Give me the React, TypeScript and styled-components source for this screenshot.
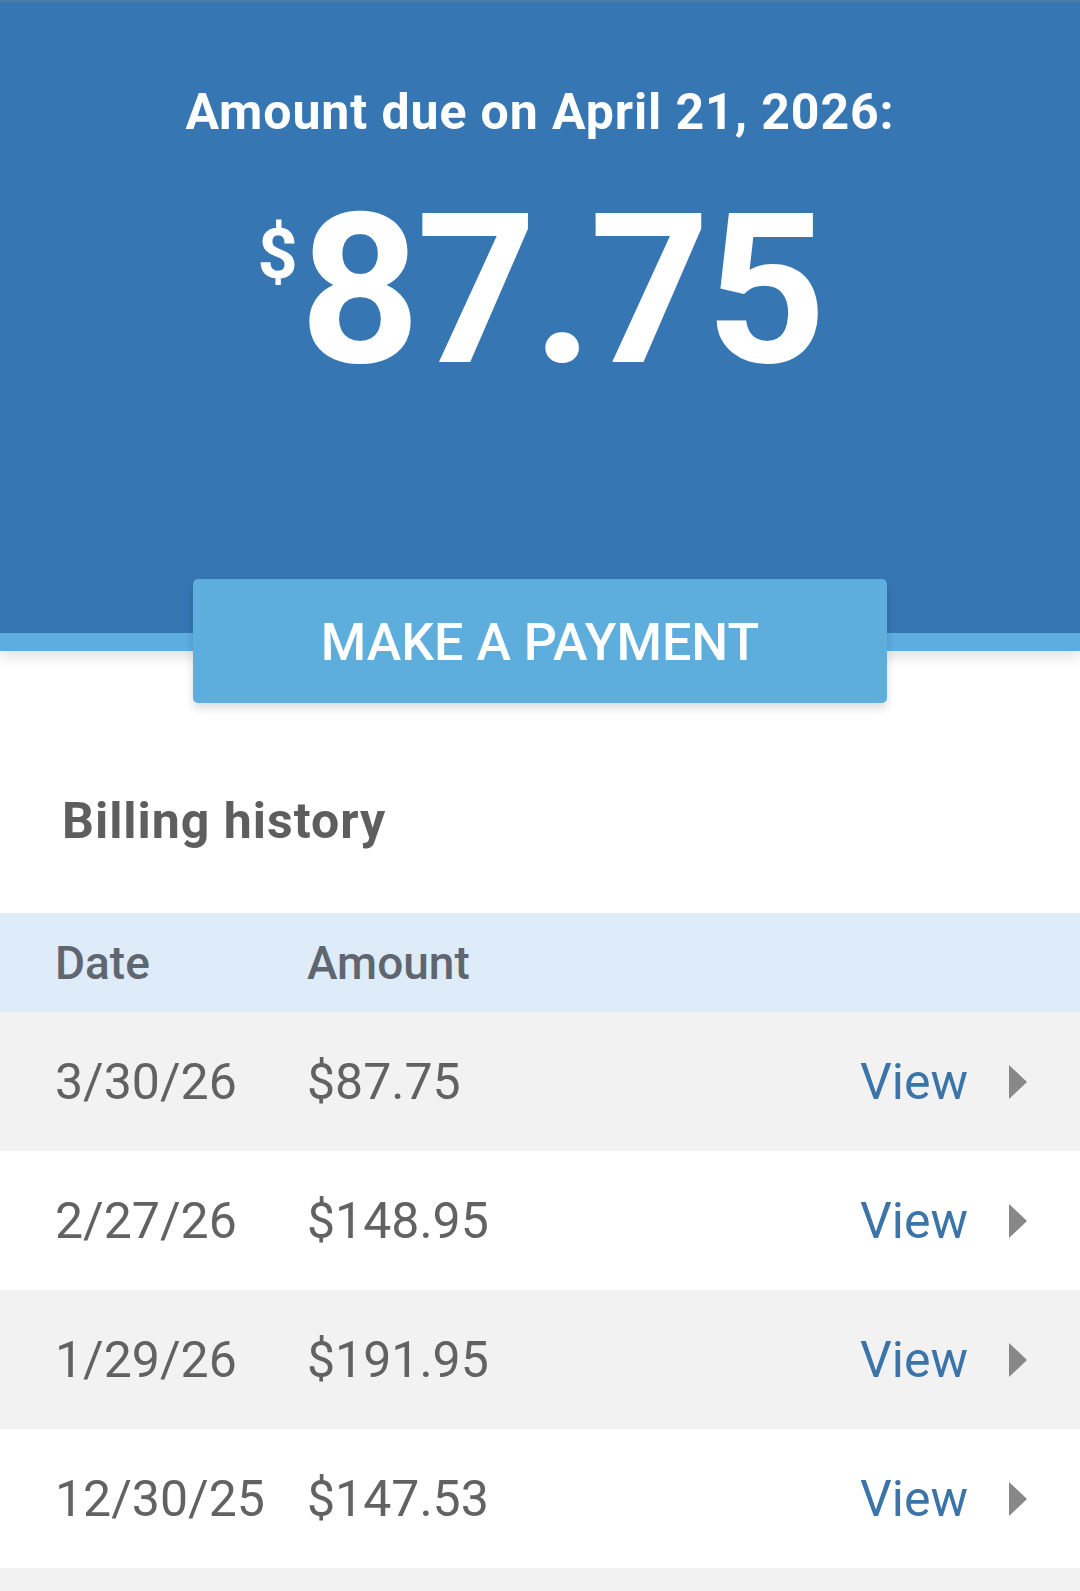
import React from "react"
import styled, { createGlobalStyle } from "styled-components"

const GlobalStyle = createGlobalStyle`
  body {
    margin: 0;
    background: #ffffff;
    font-family: Roboto, "Noto Sans", "Liberation Sans", sans-serif;
  }
`

const Page = styled.main`
  width: 1080px;
  overflow: hidden;
`

const Header = styled.header`
  position: relative;
  background: #3676b3;
  border-top: 2px solid #4b7ca6;
  border-bottom: 18px solid #5dade0;
  box-shadow: 0 6px 14px rgba(0, 0, 0, 0.12);
  padding: 81px 0 0;
  height: 550px;
  box-sizing: content-box;
  text-align: center;
  color: #ffffff;
`

const DueTitle = styled.h1`
  margin: 0;
  font-size: 50px;
  line-height: 58px;
  font-weight: 700;
  letter-spacing: 0.9px;
`

const AmountRow = styled.div`
  display: flex;
  justify-content: center;
  align-items: flex-start;
  margin-top: 44px;
`

const Currency = styled.span`
  font-size: 70px;
  line-height: 70px;
  font-weight: 700;
  margin-top: 34px;
  margin-right: 2px;
`

const BigAmount = styled.span`
  font-size: 210px;
  line-height: 210px;
  font-weight: 700;
  letter-spacing: -4px;
`

const ButtonWrap = styled.div`
  position: relative;
  display: flex;
  justify-content: center;
  margin-top: -72px;
`

const PayButton = styled.button`
  width: 694px;
  height: 124px;
  padding-top: 4px;
  border: none;
  border-radius: 5px;
  background: #5daedd;
  color: #ffffff;
  font-family: inherit;
  font-size: 52px;
  font-weight: 500;
  text-transform: uppercase;
  box-shadow: 0 5px 10px rgba(0, 0, 0, 0.14);
  cursor: pointer;
`

const SectionTitle = styled.h2`
  margin: 89px 0 63px 62px;
  font-size: 50px;
  line-height: 58px;
  font-weight: 700;
  letter-spacing: 1px;
  color: #5e5e5e;
`

const Row = styled.div<{ $bg: string; $h: number }>`
  display: grid;
  grid-template-columns: 252px 1fr auto 18px;
  align-items: center;
  height: ${(p) => p.$h}px;
  padding: 0 53px 0 55px;
  background: ${(p) => p.$bg};
  box-sizing: border-box;
`

const HeadCell = styled.span`
  font-size: 46px;
  font-weight: 500;
  color: #5f6670;
`

const Cell = styled.span`
  font-size: 50px;
  font-weight: 400;
  color: #626262;
`

const ViewLink = styled.a`
  font-size: 50px;
  font-weight: 400;
  color: #3a74a9;
  text-decoration: none;
  margin-right: 41px;
`

const Arrow = () => (
  <svg width="18" height="34" viewBox="0 0 18 34">
    <polygon points="0,0 18,17 0,34" fill="#888888" />
  </svg>
)

const bills = [
  { date: "3/30/26", amount: "$87.75" },
  { date: "2/27/26", amount: "$148.95" },
  { date: "1/29/26", amount: "$191.95" },
  { date: "12/30/25", amount: "$147.53" },
]

export default function App() {
  return (
    <Page>
      <GlobalStyle />
      <Header>
        <DueTitle>Amount due on April 21, 2026:</DueTitle>
        <AmountRow>
          <Currency>$</Currency>
          <BigAmount>87.75</BigAmount>
        </AmountRow>
      </Header>
      <ButtonWrap>
        <PayButton>Make a payment</PayButton>
      </ButtonWrap>
      <SectionTitle>Billing history</SectionTitle>
      <Row $bg="#deebf8" $h={99}>
        <HeadCell>Date</HeadCell>
        <HeadCell>Amount</HeadCell>
      </Row>
      {bills.map((b, i) => (
        <Row key={b.date} $bg={i % 2 === 0 ? "#f2f2f2" : "#ffffff"} $h={139}>
          <Cell>{b.date}</Cell>
          <Cell>{b.amount}</Cell>
          <ViewLink href="#">View</ViewLink>
          <Arrow />
        </Row>
      ))}
      <Row $bg="#f2f2f2" $h={23} />
    </Page>
  )
}
